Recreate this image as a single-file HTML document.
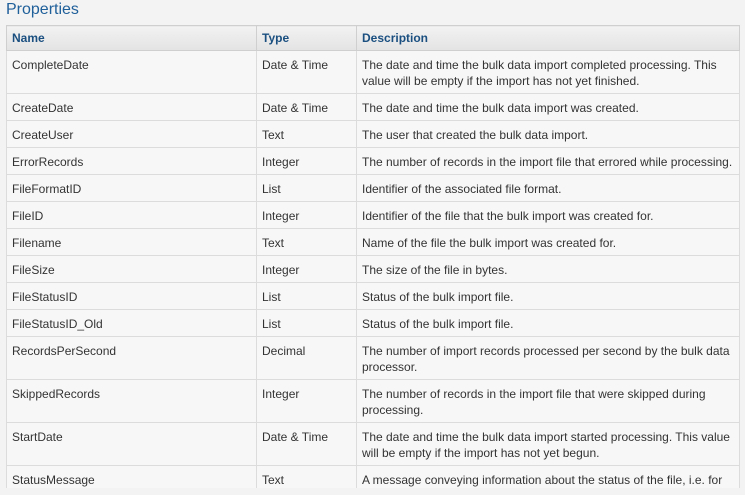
<!DOCTYPE html>
<html><head><style>
html,body{margin:0;padding:0;background:#f3f3f3;width:745px;height:495px;overflow:hidden;font-family:"Liberation Sans",sans-serif;}
h2{margin:0;position:absolute;left:6px;top:0px;font-weight:normal;font-size:16px;color:#1f5f9a;line-height:20px;}
.wrap{position:absolute;left:6px;top:25px;width:734px;height:463px;overflow:hidden;}
table{border-collapse:collapse;width:733px;table-layout:fixed;font-size:12px;color:#333;}
th{background:linear-gradient(#f2f2f2,#e3e3e3);color:#1a4f80;text-align:left;font-size:12px;height:24px;padding:0 5px;border:1px solid #cfcfcf;}
td{vertical-align:top;padding:6px 5px 4px 5px;line-height:16px;border:1px solid #dcdcdc;background:#f7f7f7;}
</style></head><body>
<h2>Properties</h2>
<div class="wrap"><table>
<colgroup><col style="width:250px"><col style="width:100px"><col style="width:383px"></colgroup>
<tr><th>Name</th><th>Type</th><th>Description</th></tr>
<tr><td>CompleteDate</td><td>Date &amp; Time</td><td>The date and time the bulk data import completed processing. This value will be empty if the import has not yet finished.</td></tr>
<tr><td>CreateDate</td><td>Date &amp; Time</td><td>The date and time the bulk data import was created.</td></tr>
<tr><td>CreateUser</td><td>Text</td><td>The user that created the bulk data import.</td></tr>
<tr><td>ErrorRecords</td><td>Integer</td><td>The number of records in the import file that errored while processing.</td></tr>
<tr><td>FileFormatID</td><td>List</td><td>Identifier of the associated file format.</td></tr>
<tr><td>FileID</td><td>Integer</td><td>Identifier of the file that the bulk import was created for.</td></tr>
<tr><td>Filename</td><td>Text</td><td>Name of the file the bulk import was created for.</td></tr>
<tr><td>FileSize</td><td>Integer</td><td>The size of the file in bytes.</td></tr>
<tr><td>FileStatusID</td><td>List</td><td>Status of the bulk import file.</td></tr>
<tr><td>FileStatusID_Old</td><td>List</td><td>Status of the bulk import file.</td></tr>
<tr><td>RecordsPerSecond</td><td>Decimal</td><td>The number of import records processed per second by the bulk data processor.</td></tr>
<tr><td>SkippedRecords</td><td>Integer</td><td>The number of records in the import file that were skipped during processing.</td></tr>
<tr><td>StartDate</td><td>Date &amp; Time</td><td>The date and time the bulk data import started processing. This value will be empty if the import has not yet begun.</td></tr>
<tr><td>StatusMessage</td><td>Text</td><td>A message conveying information about the status of the file, i.e. for example an error "file not found".</td></tr>
</table></div>
</body></html>
